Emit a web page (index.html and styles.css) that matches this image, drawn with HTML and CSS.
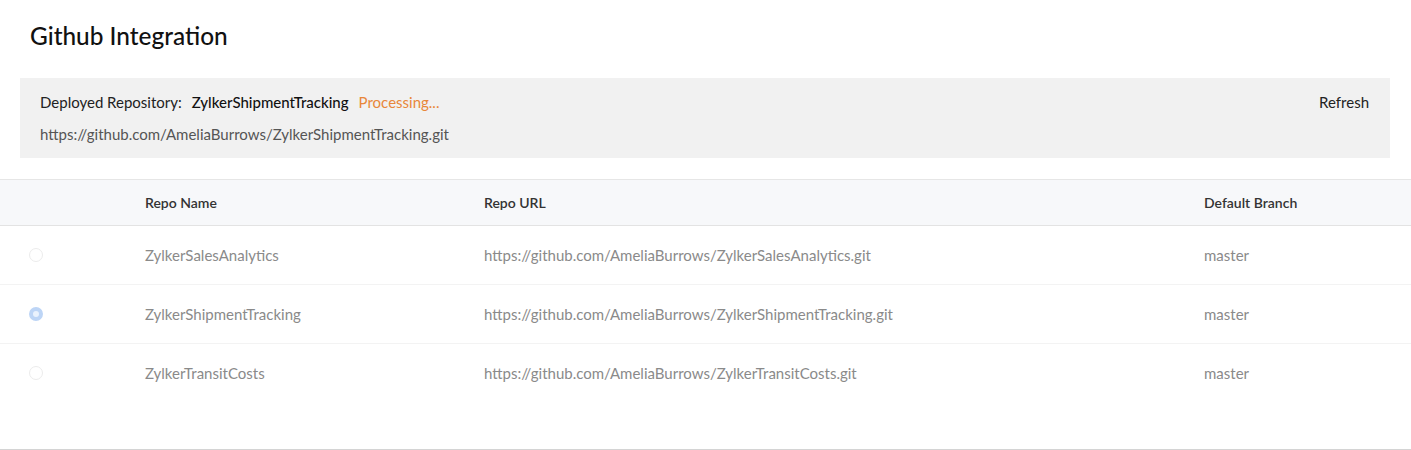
FILE: index.html
```html
<!DOCTYPE html>
<html lang="en">
<head>
    <meta charset="UTF-8">
    <meta name="viewport" content="width=device-width, initial-scale=1.0">
    <title>Github Integration</title>
    <link rel="stylesheet" href="styles.css">
</head>
<body>
    <div class="page">
        <h1 class="page-title">Github Integration</h1>

        <div class="deploy-box">
            <div class="deploy-info">
                <div class="deploy-line">
                    <span class="deploy-label">Deployed Repository:</span>
                    <span class="deploy-name">ZylkerShipmentTracking</span>
                    <span class="deploy-status">Processing...</span>
                </div>
                <div class="deploy-url">https://github.com/AmeliaBurrows/ZylkerShipmentTracking.git</div>
            </div>
            <a class="refresh-link" href="#">Refresh</a>
        </div>

        <div class="repo-table">
            <div class="repo-row repo-head">
                <div></div>
                <div>Repo Name</div>
                <div>Repo URL</div>
                <div>Default Branch</div>
            </div>
            <label class="repo-row">
                <div><input type="radio" name="repo" class="repo-radio"></div>
                <div>ZylkerSalesAnalytics</div>
                <div>https://github.com/AmeliaBurrows/ZylkerSalesAnalytics.git</div>
                <div>master</div>
            </label>
            <label class="repo-row">
                <div><input type="radio" name="repo" class="repo-radio" checked></div>
                <div>ZylkerShipmentTracking</div>
                <div>https://github.com/AmeliaBurrows/ZylkerShipmentTracking.git</div>
                <div>master</div>
            </label>
            <label class="repo-row last">
                <div><input type="radio" name="repo" class="repo-radio"></div>
                <div>ZylkerTransitCosts</div>
                <div>https://github.com/AmeliaBurrows/ZylkerTransitCosts.git</div>
                <div>master</div>
            </label>
        </div>
    </div>
</body>
</html>
```

FILE: styles.css
```css
body {
    font-family: Lato, "Open Sans", Arial, sans-serif;
    background-color: #fff;
    color: #333;
    margin: 0;
}

.page {
    height: 449px;
    border-bottom: 1px solid #d4d4d4;
}

.page-title {
    font-size: 24.4px;
    font-weight: 500;
    color: #111;
    line-height: 30px;
    margin: 0;
    padding: 21px 30px 27px;
}

.deploy-box {
    display: flex;
    justify-content: space-between;
    align-items: flex-start;
    background-color: #f1f1f1;
    margin: 0 21px 0 20px;
    padding: 14px 21px 14px 20px;
    font-size: 15px;
    line-height: 20px;
}

.deploy-line {
    display: flex;
    gap: 10px;
    margin-bottom: 12px;
}

.deploy-label {
    color: #222;
}

.deploy-name {
    color: #111;
    font-weight: 500;
}

.deploy-status {
    color: #e8873a;
}

.deploy-url {
    color: #555;
}

.refresh-link {
    color: #222;
    text-decoration: none;
}

.repo-table {
    margin-top: 21px;
    font-size: 15px;
}

.repo-row {
    display: grid;
    grid-template-columns: 145px 339px 720px 1fr;
    align-items: center;
    height: 58px;
    border-bottom: 1px solid #f3f3f3;
    color: #8a8a8a;
}

.repo-row.last {
    border-bottom: none;
}

.repo-head {
    height: 45px;
    background-color: #f7f8fa;
    border-top: 1px solid #e6e6e6;
    border-bottom: 1px solid #e3e3e3;
    color: #333;
    font-weight: 600;
    font-size: 14px;
}

.repo-radio {
    appearance: none;
    width: 14px;
    height: 14px;
    margin: 0 0 0 29px;
    border: 1px solid #ececec;
    border-radius: 50%;
    display: block;
    background: #fff;
}

.repo-radio:checked {
    border: 4px solid #bdd5f6;
    background: #eaf2fd;
}
```
